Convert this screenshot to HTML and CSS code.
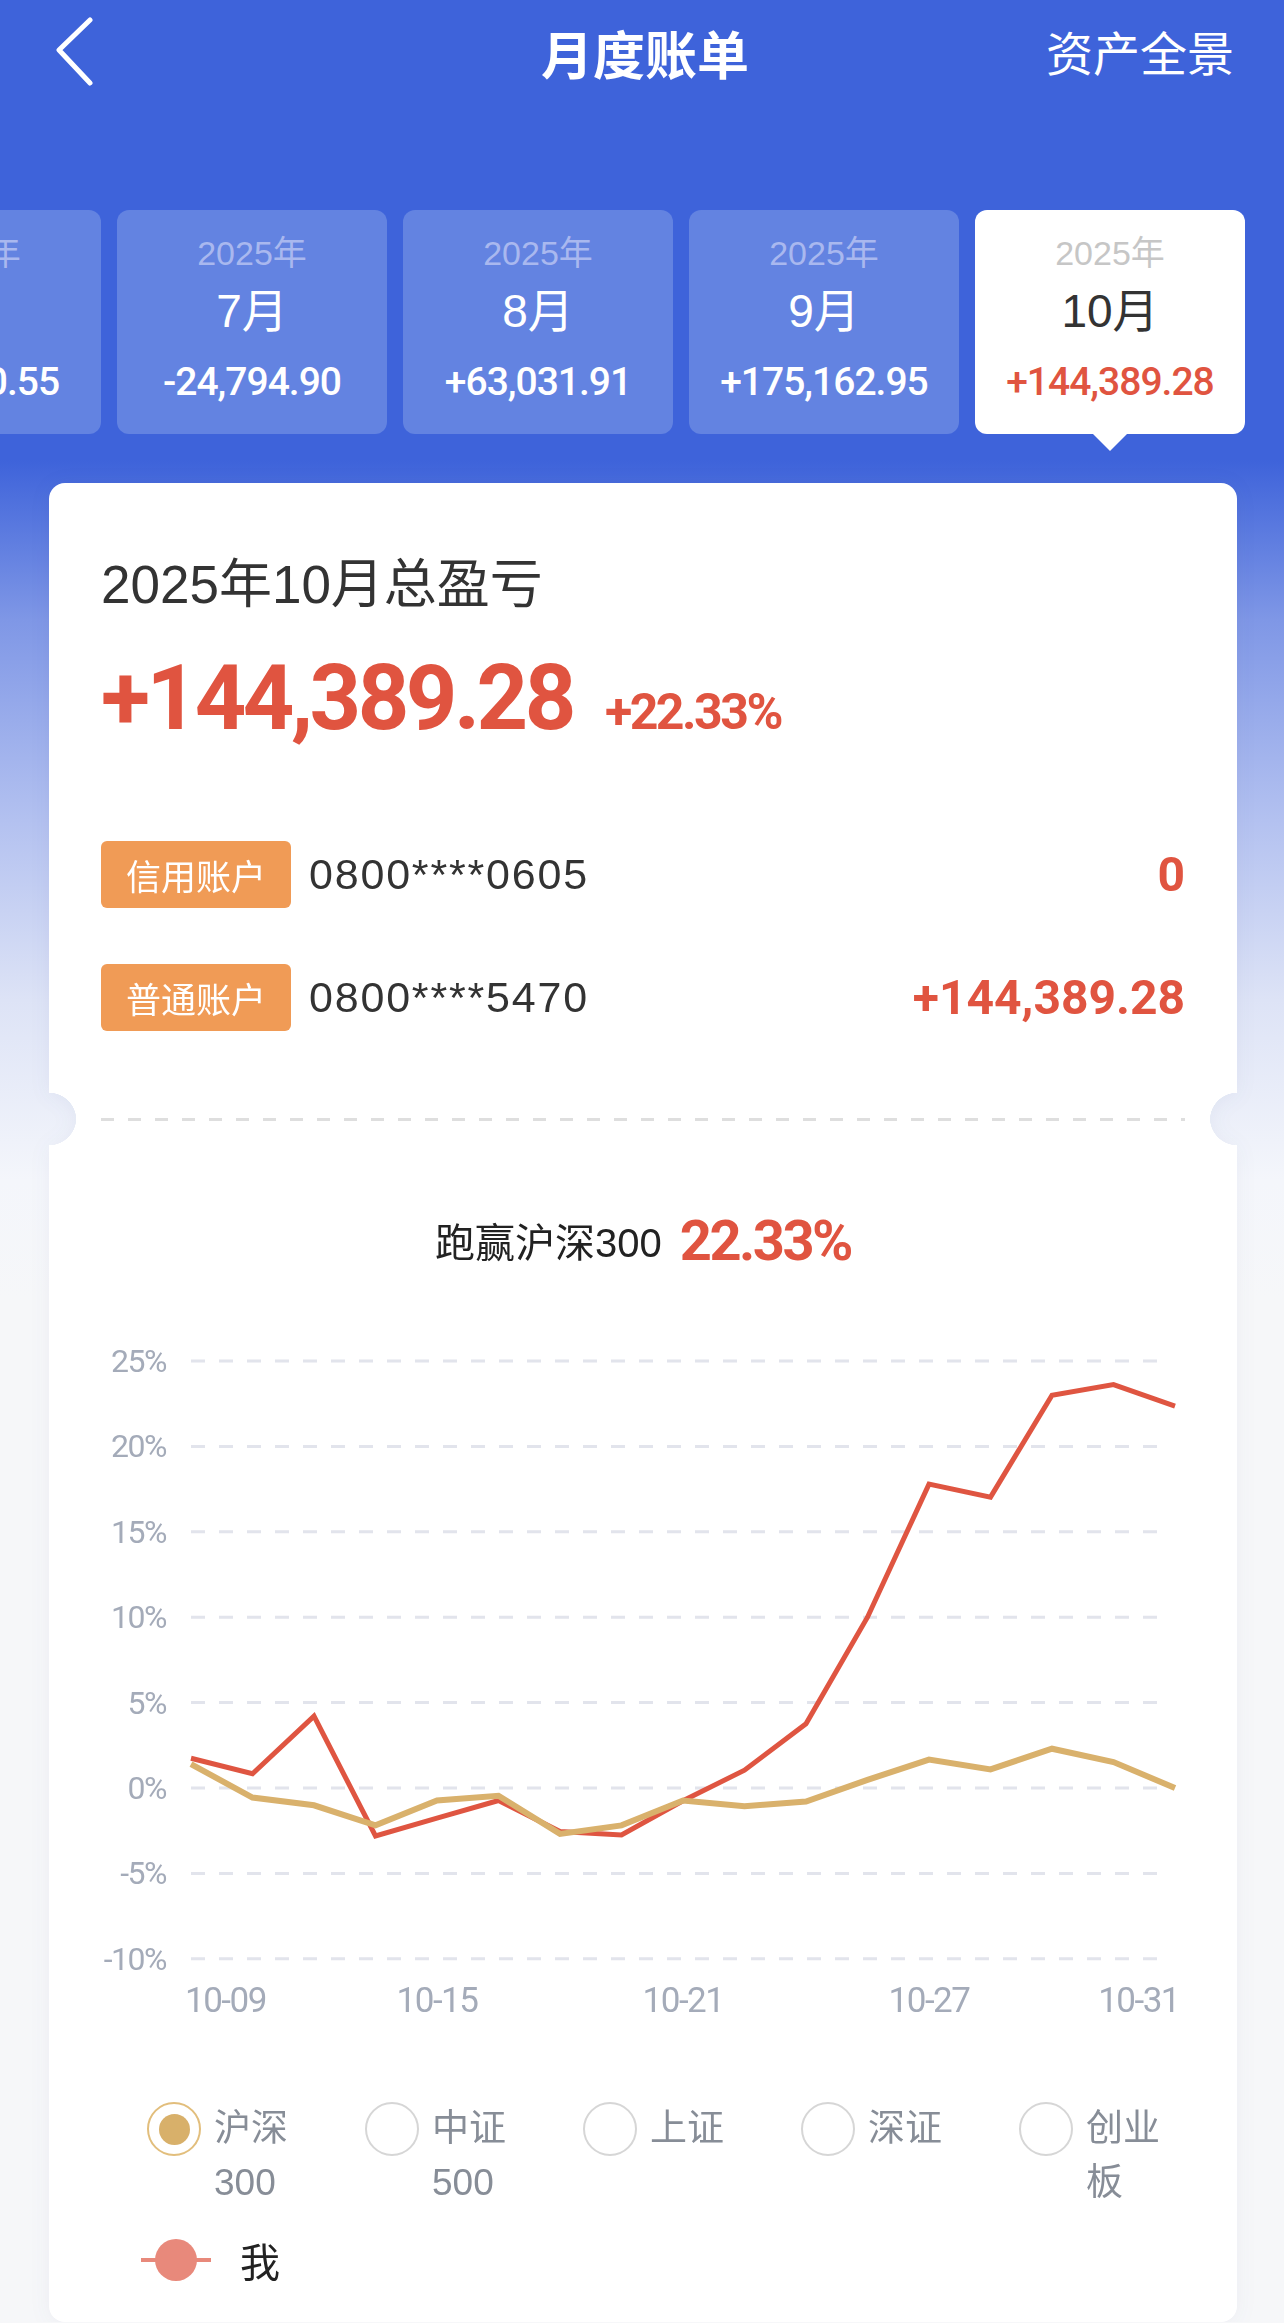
FILE: index.html
```html
<!DOCTYPE html>
<html lang="zh-CN">
<head>
    <meta charset="UTF-8">
    <meta name="viewport" content="width=device-width, initial-scale=1.0">
    <title>月度账单</title>
    <link rel="stylesheet" href="styles.css">
</head>
<body>
    <header class="topbar">
        <a class="back" href="#">
            <svg width="40" height="70" viewBox="0 0 40 70">
                <path d="M34 3 L3 33 L34 66" fill="none" stroke="#fff" stroke-width="5" stroke-linecap="round" stroke-linejoin="round"/>
            </svg>
        </a>
        <h1>月度账单</h1>
        <a class="overview" href="#">资产全景</a>
    </header>

    <!-- Month picker, scrolled so that the current month sits at the right -->
    <div class="months">
        <div class="month first">
            <span class="year">2025年</span>
            <span class="mon">6月</span>
            <span class="amount">+36,120.55</span>
        </div>
        <div class="month">
            <span class="year">2025年</span>
            <span class="mon">7月</span>
            <span class="amount">-24,794.90</span>
        </div>
        <div class="month">
            <span class="year">2025年</span>
            <span class="mon">8月</span>
            <span class="amount">+63,031.91</span>
        </div>
        <div class="month">
            <span class="year">2025年</span>
            <span class="mon">9月</span>
            <span class="amount">+175,162.95</span>
        </div>
        <div class="month active">
            <span class="year">2025年</span>
            <span class="mon">10月</span>
            <span class="amount">+144,389.28</span>
        </div>
    </div>

    <main class="card">
        <section class="card-top">
            <h2 class="total-title">2025年10月总盈亏</h2>
            <div class="total">
                <span class="total-value">+144,389.28</span>
                <span class="total-pct">+22.33%</span>
            </div>
            <div class="account">
                <span class="tag">信用账户</span>
                <span class="acc-no">0800****0605</span>
                <span class="acc-value">0</span>
            </div>
            <div class="account">
                <span class="tag">普通账户</span>
                <span class="acc-no">0800****5470</span>
                <span class="acc-value">+144,389.28</span>
            </div>
        </section>

        <section class="card-bottom">
            <div class="dash"></div>
            <p class="beat">跑赢沪深300<span>22.33%</span></p>

            <svg class="chart" width="1084" height="710" viewBox="0 0 1084 710">
                <g stroke="#e2e4ec" stroke-width="3" stroke-dasharray="14 14">
                    <line x1="90" y1="39" x2="1063" y2="39"/>
                    <line x1="90" y1="124.4" x2="1063" y2="124.4"/>
                    <line x1="90" y1="209.8" x2="1063" y2="209.8"/>
                    <line x1="90" y1="295.2" x2="1063" y2="295.2"/>
                    <line x1="90" y1="380.6" x2="1063" y2="380.6"/>
                    <line x1="90" y1="466" x2="1063" y2="466"/>
                    <line x1="90" y1="551.4" x2="1063" y2="551.4"/>
                    <line x1="90" y1="636.8" x2="1063" y2="636.8"/>
                </g>
                <g class="axis" text-anchor="end">
                    <text x="65" y="50">25%</text>
                    <text x="65" y="135.4">20%</text>
                    <text x="65" y="220.8">15%</text>
                    <text x="65" y="306.2">10%</text>
                    <text x="65" y="391.6">5%</text>
                    <text x="65" y="477">0%</text>
                    <text x="65" y="562.4">-5%</text>
                    <text x="65" y="647.8">-10%</text>
                </g>
                <g class="axis xaxis">
                    <text x="84" y="690">10-09</text>
                    <text x="336" y="690" text-anchor="middle">10-15</text>
                    <text x="582" y="690" text-anchor="middle">10-21</text>
                    <text x="828" y="690" text-anchor="middle">10-27</text>
                    <text x="1078" y="690" text-anchor="end">10-31</text>
                </g>
                <polyline fill="none" stroke="#df5541" stroke-width="5"
                    points="90,436.3 151.5,451.7 213,394.1 274.5,514 336,496.2 397.5,478.5 459,509.6 520.5,513 582,478.8 643.5,448.2 705,401.8 766.5,295.2 828,162.1 889.5,175.1 951,73.2 1012.5,62.6 1074,84.1"/>
                <polyline fill="none" stroke="#d9b16c" stroke-width="6"
                    points="90,442.1 151.5,475.6 213,483.3 274.5,503.4 336,478.5 397.5,473.7 459,511.9 520.5,503.4 582,478.5 643.5,484.3 705,479.5 766.5,457.8 828,437.6 889.5,447.4 951,426.7 1012.5,440 1074,466"/>
            </svg>

            <div class="legend">
                <label class="opt"><span class="radio checked"></span><span class="opt-text">沪深<br>300</span></label>
                <label class="opt"><span class="radio"></span><span class="opt-text">中证<br>500</span></label>
                <label class="opt"><span class="radio"></span><span class="opt-text">上证</span></label>
                <label class="opt"><span class="radio"></span><span class="opt-text">深证</span></label>
                <label class="opt"><span class="radio"></span><span class="opt-text">创业<br>板</span></label>
            </div>

            <div class="me">
                <svg width="70" height="44" viewBox="0 0 70 44">
                    <line x1="0" y1="22" x2="70" y2="22" stroke="#e8897b" stroke-width="4"/>
                    <circle cx="35" cy="22" r="21" fill="#e8897b"/>
                </svg>
                <span>我</span>
            </div>
        </section>
    </main>
</body>
</html>
```

FILE: styles.css
```css
body {
    margin: 0;
    width: 1284px;
    font-family: "Liberation Sans", "Noto Sans CJK SC", sans-serif;
    color: #333;
    background-color: #f6f7f9;
    background-image: linear-gradient(180deg,
        #3e63da 0,
        #3e63da 460px,
        #7f97e6 620px,
        #b3c1f0 820px,
        #dde3f6 1000px,
        #f4f6fb 1180px,
        #f6f7f9 1300px);
    background-repeat: no-repeat;
    background-size: 100% 1300px;
}

/* Top navigation */
.topbar {
    display: grid;
    grid-template-columns: 1fr auto 1fr;
    align-items: center;
    height: 104px;
    padding: 0 50px 0 56px;
}

.back {
    display: flex;
}

.topbar h1 {
    margin: 0;
    font-family: "Noto Sans CJK SC", sans-serif;
    font-size: 52px;
    font-weight: bold;
    color: #fff;
}

.overview {
    justify-self: end;
    font-family: "Noto Sans CJK SC", sans-serif;
    font-size: 47px;
    color: #fff;
    text-decoration: none;
    margin-top: -4px;
}

/* Month picker */
.months {
    display: flex;
    gap: 16px;
    margin-top: 106px;
    padding-bottom: 17px;
    overflow: hidden;
}

.month {
    position: relative;
    flex: none;
    width: 270px;
    height: 224px;
    box-sizing: border-box;
    padding-top: 23px;
    display: flex;
    flex-direction: column;
    align-items: center;
    background: #6383e1;
    border-radius: 12px;
    color: #fff;
}

.month.first {
    margin-left: -169px;
}

.year {
    font-size: 34px;
    line-height: 40px;
    color: #a9b8ef;
}

.mon {
    margin-top: 10px;
    font-size: 46px;
    line-height: 56px;
}

.amount {
    margin-top: 21px;
    font-family: Roboto, sans-serif;
    font-weight: 500;
    font-size: 39px;
    line-height: 44px;
    letter-spacing: -1px;
}

.month.active {
    background: #fff;
}

.month.active .year {
    color: #c6c6c6;
}

.month.active .mon {
    color: #333;
}

.month.active .amount {
    color: #e05440;
}

.month.active::after {
    content: "";
    position: absolute;
    left: 50%;
    bottom: -17px;
    margin-left: -17px;
    border-left: 17px solid transparent;
    border-right: 17px solid transparent;
    border-top: 17px solid #fff;
}

/* Main card */
.card {
    display: block;
    margin: 32px 47px 0 49px;
    filter: drop-shadow(0 2px 10px rgba(40, 60, 120, 0.05));
}

.card-top {
    padding: 74px 52px 89px;
    border-radius: 16px 16px 0 0;
    background:
        radial-gradient(circle at 0 100%, transparent 27px, #fff 27.5px) left bottom / 50.1% 100% no-repeat,
        radial-gradient(circle at 100% 100%, transparent 27px, #fff 27.5px) right bottom / 50.1% 100% no-repeat;
}

.card-bottom {
    padding: 0 52px 35px;
    border-radius: 0 0 16px 16px;
    background:
        radial-gradient(circle at 0 0, transparent 27px, #fff 27.5px) left top / 50.1% 100% no-repeat,
        radial-gradient(circle at 100% 0, transparent 27px, #fff 27.5px) right top / 50.1% 100% no-repeat;
}

.total-title {
    margin: 0;
    font-size: 53px;
    line-height: 56px;
    font-weight: normal;
    color: #333;
}

.total {
    display: flex;
    align-items: baseline;
    margin-top: 38px;
    color: #e05440;
    font-family: Roboto, sans-serif;
    font-weight: bold;
}

.total-value {
    font-size: 90px;
    line-height: 96px;
    letter-spacing: -3.5px;
}

.total-pct {
    margin-left: 32px;
    font-size: 50px;
    letter-spacing: -2.5px;
}

.account {
    display: flex;
    align-items: center;
    margin-top: 56px;
}

.total + .account {
    margin-top: 94px;
}

.tag {
    height: 67px;
    line-height: 67px;
    padding: 0 25px;
    border-radius: 6px;
    background: #f09b56;
    color: #fff;
    font-family: "Noto Sans CJK SC", sans-serif;
    font-size: 35px;
}

.acc-no {
    margin-left: 18px;
    font-size: 43px;
    letter-spacing: 1.8px;
    color: #333;
}

.acc-value {
    margin-left: auto;
    font-family: Roboto, sans-serif;
    font-weight: bold;
    font-size: 48px;
    color: #e05440;
}

/* Chart */
.dash {
    height: 3px;
    margin-top: -2px;
    background: repeating-linear-gradient(90deg, #dedede 0 13px, transparent 13px 27px);
}

.beat {
    margin: 88px 0 0;
    text-align: center;
    font-size: 40px;
    line-height: 64px;
    color: #222;
}

.beat span {
    margin-left: 18px;
    font-family: Roboto, sans-serif;
    font-weight: bold;
    font-size: 56px;
    letter-spacing: -2.5px;
    color: #e05440;
    vertical-align: -3px;
}

.chart {
    display: block;
    margin-top: 47px;
}

.axis text {
    font-family: Roboto, sans-serif;
    font-size: 32px;
    letter-spacing: -1.5px;
    fill: #a4abb9;
}

.xaxis text {
    font-size: 35px;
}

.legend {
    display: grid;
    grid-template-columns: repeat(5, 218px);
    margin-top: 70px;
    padding-left: 46px;
}

.opt {
    display: flex;
    gap: 13px;
}

.radio {
    flex: none;
    width: 54px;
    height: 54px;
    box-sizing: border-box;
    border: 2px solid #d6d6d6;
    border-radius: 50%;
    display: flex;
    align-items: center;
    justify-content: center;
}

.radio.checked {
    border-color: #e2be7c;
}

.radio.checked::after {
    content: "";
    width: 31px;
    height: 31px;
    border-radius: 50%;
    background: #d8b06a;
}

.opt-text {
    font-size: 37px;
    line-height: 54px;
    color: #878d97;
}

.me {
    display: flex;
    align-items: center;
    gap: 29px;
    margin: 23px 0 0 40px;
    height: 54px;
}

.me span {
    font-size: 40px;
    color: #222;
}
```
